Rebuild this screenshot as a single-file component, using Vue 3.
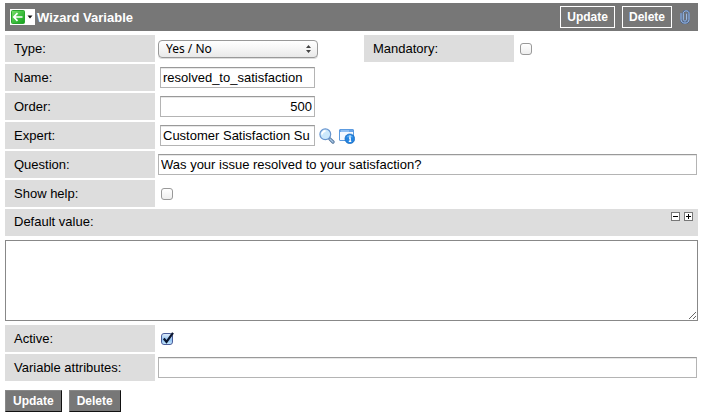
<script setup>
import { reactive, ref } from 'vue'

const form = reactive({
  type: 'Yes / No',
  mandatory: false,
  name: 'resolved_to_satisfaction',
  order: '500',
  expert: 'Customer Satisfaction Su',
  question: 'Was your issue resolved to your satisfaction?',
  showHelp: false,
  defaultValue: '',
  active: true,
  attributes: ''
})
const types = ['Yes / No']
const rows = ref(5)
</script>

<template>
  <form class="record" @submit.prevent>
    <header class="titlebar">
      <div class="nav">
        <button type="button" class="back" aria-label="Back">
          <svg width="14" height="14" viewBox="0 0 14 14">
            <defs>
              <linearGradient id="green" x1="0" y1="0" x2="1" y2="1">
                <stop offset="0" stop-color="#7be06c" />
                <stop offset="0.5" stop-color="#3fbf3f" />
                <stop offset="1" stop-color="#14a01e" />
              </linearGradient>
            </defs>
            <rect x="0.5" y="0.5" width="13" height="13" rx="1" fill="url(#green)" stroke="#2aa52e" />
            <path d="M6.500 3.200 L2.800 7 L6.500 10.800 M3 7 H11.500" fill="none" stroke="#fff" stroke-width="1.700" />
          </svg>
        </button>
        <button type="button" class="drop" aria-label="Navigation menu">
          <svg width="6" height="4" viewBox="0 0 6 4"><path d="M0.500 0.500H5.500L3 3.500Z" fill="#111" /></svg>
        </button>
      </div>
      <h1>Wizard Variable</h1>
      <div class="actions">
        <button type="submit" class="outline">Update</button>
        <button type="button" class="outline">Delete</button>
        <button type="button" class="clip" aria-label="Attachments">
          <svg width="10" height="14" viewBox="0 0 10 14" fill="none" stroke-linecap="round">
            <path d="M1 3.500V9.500C1 14.300 9 14.300 9 9.500V3.500C9 0 3.300 0 3.300 3.500V9.300C3.300 11.600 6.600 11.600 6.600 9.300V4" stroke="#3f5f94" stroke-width="1.700" />
            <path d="M1 3.500V9.500C1 14.300 9 14.300 9 9.500V3.500C9 0 3.300 0 3.300 3.500V9.300C3.300 11.600 6.600 11.600 6.600 9.300V4" stroke="#b4d0f2" stroke-width="0.900" />
          </svg>
        </button>
      </div>
    </header>

    <div class="pair">
      <div class="row">
        <label for="type">Type:</label>
        <div class="field">
          <span class="select">
            <select id="type" v-model="form.type">
              <option v-for="t in types" :key="t">{{ t }}</option>
            </select>
            <svg class="arrows" width="5" height="8" viewBox="0 0 5 8"><path d="M0 3H5L2.500 0ZM0 5H5L2.500 8Z" fill="#444" /></svg>
          </span>
        </div>
      </div>
      <div class="row">
        <label for="mandatory">Mandatory:</label>
        <div class="field"><input id="mandatory" v-model="form.mandatory" type="checkbox" /></div>
      </div>
    </div>

    <div class="row">
      <label for="name">Name:</label>
      <div class="field inset"><input id="name" v-model="form.name" type="text" class="short" /></div>
    </div>
    <div class="row">
      <label for="order">Order:</label>
      <div class="field inset"><input id="order" v-model="form.order" type="text" class="short number" /></div>
    </div>
    <div class="row">
      <label for="expert">Expert:</label>
      <div class="field inset">
        <input id="expert" v-model="form.expert" type="text" class="short" />
        <button type="button" class="icon" aria-label="Look up expert">
          <svg width="16" height="16" viewBox="0 0 16 16">
            <path d="M10.800 10.800L14 14" stroke="#4f7199" stroke-width="3.200" stroke-linecap="round" />
            <path d="M11 11L14 14" stroke="#a8c8e6" stroke-width="1.500" stroke-linecap="round" />
            <circle cx="6.300" cy="6.300" r="5.400" fill="#cbe8fc" stroke="#6795cf" stroke-width="1.200" />
            <path d="M3 6.500A3.500 3.500 0 0 1 6.500 3" fill="none" stroke="#fff" stroke-width="1.800" />
          </svg>
        </button>
        <button type="button" class="icon" aria-label="Preview expert">
          <svg width="16" height="16" viewBox="0 0 16 16">
            <rect x="0.500" y="1.500" width="14" height="11" rx="0.500" fill="#f4f9ff" stroke="#5c9be0" />
            <path d="M1 3H14" stroke="#69a5e8" stroke-width="2" />
            <path d="M2 3H10" stroke="#b9d9fa" />
            <circle cx="10.800" cy="10.800" r="4.900" fill="#2484e0" stroke="#1764b5" stroke-width="0.600" />
            <path d="M7.500 9.200A3.800 3.800 0 0 1 14.100 9.200Z" fill="#5fb2f5" />
            <path d="M11 7.500V8.800M10 10H11.200V13M9.800 13.300H12.300" fill="none" stroke="#fff" stroke-width="1.300" />
          </svg>
        </button>
      </div>
    </div>
    <div class="row">
      <label for="question">Question:</label>
      <div class="field"><input id="question" v-model="form.question" type="text" class="long" /></div>
    </div>
    <div class="row">
      <label for="help">Show help:</label>
      <div class="field"><input id="help" v-model="form.showHelp" type="checkbox" /></div>
    </div>

    <div class="wide">
      <label for="default">Default value:</label>
      <div class="sizers">
        <button type="button" aria-label="Shrink field" @click="rows = Math.max(2, rows - 1)">
          <svg width="9" height="9" viewBox="0 0 9 9"><rect x="0.500" y="0.500" width="8" height="8" fill="#fff" stroke="#777" /><path d="M2 4.500H7" stroke="#000" /></svg>
        </button>
        <button type="button" aria-label="Grow field" @click="rows++">
          <svg width="9" height="9" viewBox="0 0 9 9"><rect x="0.500" y="0.500" width="8" height="8" fill="#fff" stroke="#777" /><path d="M2 4.500H7M4.500 2V7" stroke="#000" /></svg>
        </button>
      </div>
    </div>
    <textarea id="default" v-model="form.defaultValue" :rows="rows"></textarea>

    <div class="row">
      <label for="active">Active:</label>
      <div class="field">
        <span class="tick">
          <input id="active" v-model="form.active" type="checkbox" />
          <svg v-if="form.active" width="14" height="14" viewBox="0 0 14 14"><path d="M2.800 6.500L5.500 10L12 0.800" fill="none" stroke="#0b1630" stroke-width="2.200" /></svg>
        </span>
      </div>
    </div>
    <div class="row">
      <label for="attributes">Variable attributes:</label>
      <div class="field"><input id="attributes" v-model="form.attributes" type="text" class="long" /></div>
    </div>

    <footer>
      <button type="submit" class="solid">Update</button>
      <button type="button" class="solid">Delete</button>
    </footer>
  </form>
</template>

<style>
body {
  background: #fff;
}
</style>

<style scoped>
.record {
  display: flex;
  flex-direction: column;
  gap: 2px;
  padding: 3px 4px 6px 5px;
  font-family: "Liberation Sans", Arial, sans-serif;
  font-size: 13px;
  line-height: 15px;
  color: #000;
}
button {
  margin: 0;
  padding: 0;
  border: 0;
  background: none;
  font: inherit;
  cursor: pointer;
}
svg {
  display: block;
}
.titlebar {
  display: flex;
  align-items: center;
  height: 28px;
  margin-bottom: 2px;
  padding: 0 8px 0 5px;
  background: #777;
  color: #fff;
}
.nav {
  display: flex;
  align-items: center;
  height: 16px;
  background: #fff;
}
.back {
  padding: 0 1px;
}
.drop {
  padding: 0 2px 0 1px;
}
h1 {
  flex: 1;
  margin: 0 0 0 2px;
  font-size: 13px;
  line-height: 15px;
}
.actions {
  display: flex;
  align-items: center;
  gap: 7px;
}
.outline {
  height: 22px;
  padding: 0 6px;
  border: 1px solid #fff;
  color: #fff;
  font-size: 12px;
  font-weight: bold;
}
.clip {
  margin-left: 1px;
}
.pair {
  display: grid;
  grid-template-columns: 1fr 1fr;
  gap: 25px;
}
.row {
  display: grid;
  grid-template-columns: 150px 1fr;
}
label {
  padding: 6px 9px;
}
.row label {
  background: #ddd;
}
.field {
  display: flex;
  align-items: center;
  min-width: 0;
  padding: 0 1px 0 3px;
}
.field.inset {
  gap: 4px;
  padding-left: 5px;
}
input[type="text"] {
  box-sizing: border-box;
  height: 21px;
  margin: 0;
  padding: 0 2px;
  border: 1px solid #b4b4b4;
  border-top-color: #999;
  border-radius: 0;
  background: #fff;
  box-shadow: inset 0 1px 0 #e8e8e8;
  font: inherit;
  outline: none;
}
.short {
  width: 155px;
}
input.number {
  text-align: right;
}
.long {
  width: 100%;
}
.select {
  position: relative;
}
select {
  display: block;
  appearance: none;
  width: 160px;
  height: 18px;
  padding: 0 7px;
  border: 1px solid #999;
  border-radius: 4px;
  background: linear-gradient(#fff, #f5f5f5 50%, #e9e9e9);
  box-shadow: 0 1px 0 #ddd;
  font: 12px/16px "Noto Sans", "DejaVu Sans", sans-serif;
  color: #000;
}
.arrows {
  position: absolute;
  top: 5px;
  right: 7px;
  pointer-events: none;
}
input[type="checkbox"] {
  display: block;
  appearance: none;
  box-sizing: border-box;
  width: 12px;
  height: 12px;
  margin: 0 3px;
  border: 1px solid #999;
  border-radius: 3px;
  background: linear-gradient(#fff, #eee);
}
input[type="checkbox"]:checked {
  border-color: #4a5c9a;
  background: linear-gradient(#dcebfb, #8fc0f0 60%, #c4e8ff);
}
.tick {
  position: relative;
}
.tick svg {
  position: absolute;
  top: -1px;
  left: 3px;
  pointer-events: none;
}
.wide {
  display: flex;
  justify-content: space-between;
  background: #ddd;
}
.wide label {
  padding: 5px 9px 7px;
}
.sizers {
  display: flex;
  gap: 4px;
  padding: 3px 5px;
}
.sizers button {
  height: 9px;
}
textarea {
  display: block;
  box-sizing: border-box;
  width: 100%;
  margin: 2px 0;
  padding: 2px;
  border: 1px solid #888;
  border-radius: 0;
  font: inherit;
  resize: both;
  outline: none;
}
footer {
  display: flex;
  gap: 7px;
  margin-top: 7px;
}
.solid {
  height: 22px;
  padding: 0 7px;
  border: 1px solid #999;
  border-color: #888 #111 #111 #888;
  background: #777;
  color: #fff;
  font-size: 12px;
  font-weight: bold;
}
</style>
